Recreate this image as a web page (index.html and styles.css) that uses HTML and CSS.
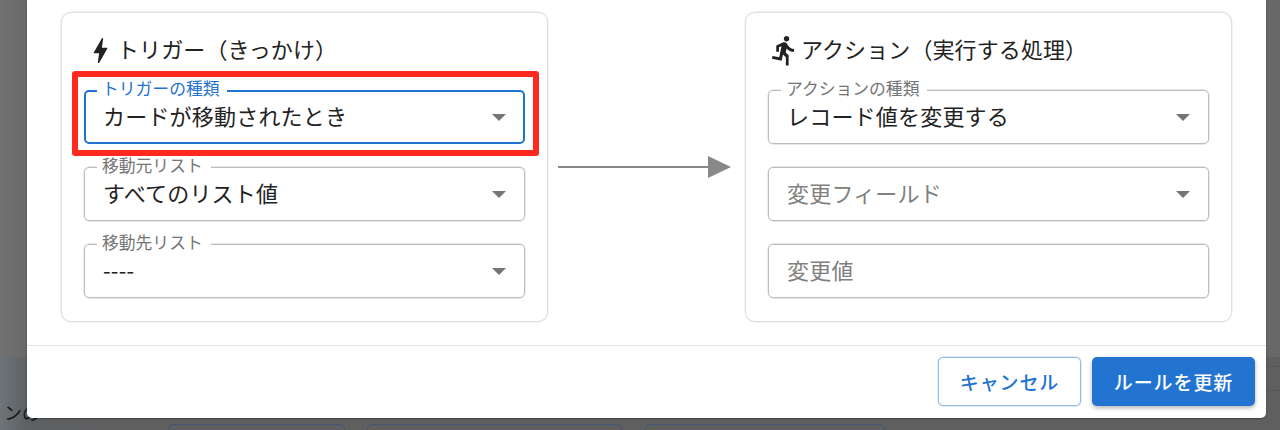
FILE: index.html
```html
<!DOCTYPE html>
<html lang="ja">
<head>
    <meta charset="UTF-8">
    <title>ルール編集</title>
    <link rel="stylesheet" href="styles.css">
</head>
<body>
    <!-- behind the dialog -->
    <div class="backdrop">
        <div class="backdrop-top"></div>
        <div class="backdrop-bottom">
            <span class="backdrop-text">ンの</span>
            <div class="backdrop-box box1"></div>
            <div class="backdrop-box box2"></div>
            <div class="backdrop-box box3"></div>
        </div>
    </div>

    <div class="dialog">
        <div class="dialog-content">
            <section class="card">
                <h2 class="card-title">
                    <svg class="title-icon" viewBox="0 0 24 24"><path d="M11 21h-1l1-7H7.5c-.58 0-.57-.32-.38-.66.19-.34.05-.08.07-.12C8.48 10.94 10.42 7.54 13 3h1l-1 7h3.5c.49 0 .56.33.47.51l-.07.15C12.96 17.55 11 21 11 21z"/></svg>
                    <span class="title-text">トリガー（きっかけ）</span>
                </h2>
                <div class="fields">
                    <div class="field focused">
                        <span class="field-label">トリガーの種類</span>
                        <span class="field-value">カードが移動されたとき</span>
                        <span class="caret"></span>
                        <div class="highlight"></div>
                    </div>
                    <div class="field">
                        <span class="field-label">移動元リスト</span>
                        <span class="field-value">すべてのリスト値</span>
                        <span class="caret"></span>
                    </div>
                    <div class="field">
                        <span class="field-label">移動先リスト</span>
                        <span class="field-value">----</span>
                        <span class="caret"></span>
                    </div>
                </div>
            </section>

            <div class="arrow">
                <svg viewBox="0 0 173 24" width="173" height="24"><rect x="0" y="11" width="152" height="2" fill="#888"/><path d="M150 1l23 11-23 11z" fill="#888"/></svg>
            </div>

            <section class="card">
                <h2 class="card-title">
                    <svg class="title-icon" viewBox="0 0 24 24"><path d="M13.49 5.48c1.1 0 2-.9 2-2s-.9-2-2-2-2 .9-2 2 .9 2 2 2zm-3.6 13.9l1-4.4 2.1 2v6h2v-7.5l-2.1-2 .6-3c1.3 1.5 3.3 2.5 5.5 2.5v-2c-1.9 0-3.5-1-4.3-2.4l-1-1.6c-.4-.6-1-1-1.7-1-.3 0-.5.1-.8.1l-5.2 2.2v4.7h2v-3.4l1.8-.7-1.6 8.1-4.9-1-.4 2 7 1.4z"/></svg>
                    <span class="title-text">アクション（実行する処理）</span>
                </h2>
                <div class="fields">
                    <div class="field">
                        <span class="field-label">アクションの種類</span>
                        <span class="field-value">レコード値を変更する</span>
                        <span class="caret"></span>
                    </div>
                    <div class="field">
                        <span class="field-value placeholder">変更フィールド</span>
                        <span class="caret"></span>
                    </div>
                    <div class="field">
                        <span class="field-value placeholder">変更値</span>
                    </div>
                </div>
            </section>
        </div>
        <div class="dialog-footer">
            <button class="btn btn-outline">キャンセル</button>
            <button class="btn btn-primary">ルールを更新</button>
        </div>
    </div>
</body>
</html>
```

FILE: styles.css
```css
* {
    box-sizing: border-box;
}
html, body {
    height: 430px;
}
body {
    margin: 0;
    position: relative;
    overflow: hidden;
    background: #666;
    font-family: "Noto Sans CJK JP", "Noto Sans", sans-serif;
    color: #222;
}

/* page behind the modal */
.backdrop {
    position: absolute;
    inset: 0;
    display: flex;
    flex-direction: column;
}
.backdrop-top {
    height: 357px;
    background: linear-gradient(90deg, #727272, #686868 27px);
}
.backdrop-bottom {
    flex: 1;
    position: relative;
    background:
        linear-gradient(#585858, #585858) 100% 9px / 14px 1px no-repeat,
        linear-gradient(#585858, #585858) 100% 33px / 14px 1px no-repeat,
        linear-gradient(90deg, #6e7478, #5e6164 27px, #5f5f5f 120px);
}
.backdrop-text {
    position: absolute;
    left: 4px;
    top: 43px;
    font-size: 18px;
    line-height: 24px;
    color: #111;
}
.backdrop-box {
    position: absolute;
    top: 67px;
    height: 20px;
    border: 1px solid #3f5674;
    border-radius: 5px;
}
.box1 {
    left: 168px;
    width: 177px;
}
.box2 {
    left: 367px;
    width: 255px;
}
.box3 {
    left: 645px;
    width: 240px;
}

/* dialog */
.dialog {
    position: relative;
    width: 1239px;
    height: 418px;
    margin-left: 27px;
    background: #fff;
    border-radius: 0 0 5px 5px;
    box-shadow: 0 1px 2px rgba(0, 0, 0, .3);
    display: flex;
    flex-direction: column;
}
.dialog-content {
    flex: 1;
    display: flex;
    align-items: flex-start;
    padding: 12px 34px 0;
    border-bottom: 1px solid #e2e2e2;
}
.card {
    width: 488px;
    height: 310px;
    padding: 21px 22px 0;
    border: 1px solid #dedede;
    border-radius: 10px;
    box-shadow: 0 0 0 .5px #e6e6e6;
}
.card-title {
    display: flex;
    align-items: center;
    height: 33px;
    margin: 0 0 23px;
    font-size: 22px;
    font-weight: 400;
    letter-spacing: .1px;
    white-space: nowrap;
}
.title-text {
    padding-bottom: 5px;
}
.title-icon {
    width: 33px;
    height: 33px;
    flex: none;
    fill: #222;
}
.fields {
    display: flex;
    flex-direction: column;
    gap: 23px;
}
.field {
    position: relative;
    display: flex;
    align-items: center;
    height: 54px;
    padding: 0 18px 4px;
    border: 1px solid #bdbdbd;
    border-radius: 5px;
    box-shadow: 0 0 0 .4px #d0d0d0;
}
.field-label {
    position: absolute;
    left: 12px;
    top: -11px;
    padding: 0 8px 0 5px;
    background: #fff;
    font-size: 16.8px;
    line-height: 16px;
    color: #757575;
    white-space: nowrap;
}
.field-value {
    font-size: 22px;
    letter-spacing: .2px;
    line-height: 30px;
    white-space: nowrap;
}
.placeholder {
    color: #808080;
}
.caret {
    position: absolute;
    right: 18px;
    top: 23px;
    width: 0;
    height: 0;
    border-left: 7.5px solid transparent;
    border-right: 7.5px solid transparent;
    border-top: 7.5px solid #757575;
}
.focused {
    border: 2px solid #1f73d1;
    box-shadow: none;
}
.focused .field-label {
    left: 11px;
    top: -12px;
    color: #1f73d1;
}
.focused .field-value {
    margin-left: -1px;
}
.focused .caret {
    right: 17px;
    top: 22px;
}

/* red marker drawn on the screenshot */
.highlight {
    position: absolute;
    left: -14px;
    right: -16px;
    top: -21px;
    bottom: -14px;
    border: 6px solid #ff2a1f;
    border-radius: 3px;
    pointer-events: none;
}

.arrow {
    flex: none;
    width: 197px;
    height: 310px;
    display: flex;
    align-items: center;
    padding-left: 10px;
}

.dialog-footer {
    height: 72px;
    display: flex;
    justify-content: flex-end;
    align-items: flex-start;
    gap: 11px;
    padding: 11px 11px 0 0;
}
.btn {
    height: 49px;
    border-radius: 5px;
    font-family: inherit;
    font-size: 19px;
    font-weight: 500;
    letter-spacing: .9px;
}
.btn-outline {
    width: 143px;
    background: #fff;
    color: #1f73d1;
    border: 1px solid #93bde9;
    box-shadow: 0 0 0 .4px #b5d2f0;
}
.btn-primary {
    width: 163px;
    background: #2274d0;
    color: #fff;
    border: 0;
    box-shadow: 0 2px 4px rgba(0, 0, 0, .3);
}
```
